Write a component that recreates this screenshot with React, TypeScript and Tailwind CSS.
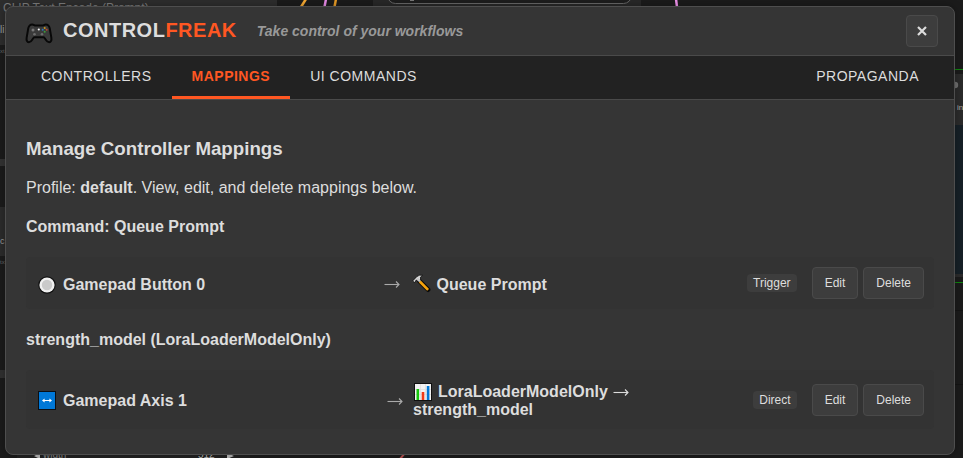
import type { ReactNode } from "react";

function GamepadIcon() {
  return (
    <svg width="28" height="22" viewBox="0 0 28 22" className="mt-[5px] block shrink-0">
      <path
        d="M7.200 1.600c1.800 0 2 1 3.400 1h6.800c1.400 0 1.600-1 3.400-1 2.600 0 3.400 1.600 4 4l1.500 8.700c.5 3-.3 5-2.200 5-2.200 0-3-2.300-4.500-4.300-.4-.6-.8-.8-1.400-.8H9.800c-.6 0-1 .2-1.400.8-1.500 2-2.300 4.300-4.500 4.300-1.900 0-2.700-2-2.200-5L3.200 5.600c.6-2.400 1.400-4 4-4z"
        fill="#3a3a3a" stroke="#080808" strokeWidth="2" strokeLinejoin="round"
      />
      <circle cx="8" cy="7" r="1.500" fill="#777" />
      <circle cx="9.500" cy="11.200" r="1.300" fill="#6c6c6c" />
      <circle cx="17" cy="11.200" r="1.300" fill="#6c6c6c" />
      <circle cx="13.800" cy="6.500" r="1.100" fill="#f4f4f4" />
      <circle cx="19.700" cy="5" r="1" fill="#c99a22" />
      <circle cx="17.700" cy="6.800" r="1" fill="#2878b8" />
      <circle cx="21.700" cy="6.800" r="1" fill="#b7442e" />
      <circle cx="19.700" cy="8.700" r="1" fill="#3b9a3b" />
    </svg>
  );
}

function ArrowIcon({ className }: { className: string }) {
  return (
    <svg width="16" height="9" viewBox="0 0 16 9" fill="none" stroke="currentColor" className={className}>
      <path d="M.5 4.500h14.500" strokeWidth="1.100" />
      <path d="M12 1.500l3 3-3 3" strokeWidth="1.100" />
    </svg>
  );
}

function RadioIcon() {
  return (
    <svg width="18" height="18" viewBox="0 0 18 18" className="mt-[3px] block">
      <circle cx="9" cy="9" r="8.700" fill="#111" />
      <circle cx="9" cy="9" r="7.600" fill="#f0f0f0" />
      <circle cx="9" cy="9" r="5.200" fill="#cacaca" />
    </svg>
  );
}

function AxisIcon() {
  return (
    <svg width="18" height="19" viewBox="0 0 18 19" className="mt-[2px] block">
      <rect width="18" height="19" fill="#0b0f14" />
      <rect x="1" y="1" width="16" height="17" fill="#0078d7" />
      <path d="M5.500 9.500h7" stroke="#fff" strokeWidth="1.200" />
      <path d="M6.600 7.600v3.800L4 9.500zM11.400 7.600v3.800L14 9.500z" fill="#fff" />
    </svg>
  );
}

function HammerIcon() {
  return (
    <svg width="19" height="19" viewBox="0 0 19 19" className="block">
      <path d="M7.500 7.200l8.600 8.500" stroke="#0a0a0a" strokeWidth="4.600" strokeLinecap="round" />
      <path d="M.6 7L5 2.400Q7.400.6 10.600 1.300L8.400 3.200 8.600 5.200 6.200 7.600 4.400 5.800 2.600 8.600z" fill="#d8d8d8" stroke="#0a0a0a" strokeWidth=".8" strokeLinejoin="round" />
      <path d="M7.800 7.500l8.300 8.400" stroke="#f7a30c" strokeWidth="2.700" />
      <path d="M5.200 4.600l2.800 2.900" stroke="#c6c6c6" strokeWidth="2.200" />
    </svg>
  );
}

function ChartIcon() {
  return (
    <svg width="18" height="18" viewBox="0 0 18 18" className="block">
      <rect width="18" height="18" fill="#101010" />
      <rect x="1" y="1" width="16" height="16" fill="#f2f2f2" />
      <path d="M1 6.500h16M1 11.500h16M6.500 1v16M11.500 1v16" stroke="#dcdcdc" strokeWidth=".7" />
      <rect x="2.500" y="6" width="2.600" height="11" fill="#16c60c" />
      <rect x="7.700" y="9" width="2.600" height="8" fill="#f03a17" />
      <rect x="12.800" y="3" width="2.600" height="14" fill="#0078d7" />
    </svg>
  );
}

function CanvasBackdrop() {
  return (
    <svg width="963" height="458" className="absolute inset-0" fontFamily="'Liberation Sans', Arial, sans-serif">
      <rect width="963" height="458" fill="#1b1b1b" />
      <rect width="277" height="45" fill="#2d2d2d" />
      <text x="3" y="11.500" fontSize="12" fill="#7c7c7c">CLIP Text Encode (Prompt)</text>
      <text x="0" y="33" fontSize="10" fill="#999">li</text>
      <text x="0" y="53" fontSize="6" fill="#666">xt</text>
      <rect y="159" width="6" height="7" fill="#333" />
      <rect y="207" width="6" height="49" fill="#2b2b2b" />
      <text x="0" y="244" fontSize="9" fill="#999">c</text>
      <text x="0" y="264" fontSize="6" fill="#666">tx</text>
      <rect y="370" width="6" height="8" fill="#303030" />
      <rect x="373" width="268" height="8" fill="#282828" />
      <rect x="387.500" y="-14" width="244" height="17.500" rx="8" fill="#1d1d1d" stroke="#666" />
      <rect x="410" width="4" height="1" fill="#777" />
      <path d="M301 7l5-8" stroke="#f5a833" strokeWidth="2.500" />
      <path d="M324.500 7l1.500-8" stroke="#e78ae7" strokeWidth="2.500" />
      <path d="M334.500 7l1.500-8" stroke="#e59a26" strokeWidth="2.500" />
      <path d="M677 7l-1-8" stroke="#f092ec" strokeWidth="2.500" />
      <path d="M955 69.500h8" stroke="#0f850f" />
      <rect x="955" y="74" width="8" height="203" fill="#2b2b2b" />
      <circle cx="955" cy="85" r="3.200" fill="#707070" />
      <text x="957" y="110" fontSize="8" fill="#aaa">in</text>
      <rect x="955" y="125" width="8" height="149" fill="#162027" />
      <path d="M955 282.500h8" stroke="#0f850f" />
      <path d="M955 310.500h8M955 384.500h8" stroke="#141414" />
      <rect x="17" y="454" width="233" height="4" fill="#222" />
      <path d="M34 456l6-3v6zM227 453l7 3-7 3z" fill="#bbb" />
      <text x="43" y="458" fontSize="10" fill="#888">width</text>
      <text x="198" y="458" fontSize="10" fill="#bbb">512</text>
      <path d="M400 459l5-6" stroke="#b85252" strokeWidth="2" />
    </svg>
  );
}

function Button({ children }: { children: ReactNode }) {
  return (
    <button className="h-8 rounded border border-[#4a4a4a] bg-[#3d3d3d] px-3 text-xs leading-none text-[#dddddd]">
      {children}
    </button>
  );
}

type MappingProps = {
  icon: ReactNode;
  source: string;
  sourceWidth: string;
  arrowGap: string;
  target: ReactNode;
  mode: string;
  height: string;
};

function Mapping({ icon, source, sourceWidth, arrowGap, target, mode, height }: MappingProps) {
  return (
    <div className={`flex items-center rounded bg-[#333333] pr-2.5 pl-3 ${height}`}>
      <div className={`flex shrink-0 items-center gap-[7px] leading-[18px] font-bold text-[#dddddd] ${sourceWidth}`}>
        {icon}
        <span className="pt-[3px]">{source}</span>
      </div>
      <ArrowIcon className={`mt-[3px] shrink-0 text-[#aaaaaa] ${arrowGap}`} />
      <div className="flex-1 leading-[18px] font-bold text-[#dddddd]">{target}</div>
      <span className="mr-[15px] rounded bg-[#3d3d3d] px-1.5 text-xs leading-[18px] text-[#dddddd]">{mode}</span>
      <div className="flex gap-[5px]">
        <Button>Edit</Button>
        <Button>Delete</Button>
      </div>
    </div>
  );
}

export default function App() {
  return (
    <div className="relative h-[458px] w-[963px] overflow-hidden bg-[#191919] font-['Liberation_Sans',Arial,sans-serif] text-base">
      <CanvasBackdrop />
      <main className="relative mt-1.5 ml-[5px] flex h-[449px] w-[950px] flex-col overflow-hidden rounded-lg border border-[#4e4e4e] bg-[#353535] text-[#dddddd] shadow-[0_0_8px_rgba(0,0,0,0.3)]">
        <header className="flex h-[49px] shrink-0 items-center border-b border-[#4a4a4a] pr-4 pl-[19px]">
          <GamepadIcon />
          <h1 className="ml-2.5 pb-[3px] text-xl leading-none font-bold tracking-[0.5px] whitespace-nowrap">
            CONTROL<span className="text-[#ff5722]">FREAK</span>
          </h1>
          <span className="ml-5 text-sm font-bold text-[#999999] italic">Take control of your workflows</span>
          <button className="ml-auto flex size-8 items-center justify-center rounded border border-[#4a4a4a] bg-[#3d3d3d]">
            <svg width="10" height="10" viewBox="0 0 10 10">
              <path d="M1 1l8 8M9 1L1 9" stroke="#dddddd" strokeWidth="2.200" />
            </svg>
          </button>
        </header>
        <nav className="flex h-11 shrink-0 border-b border-[#4a4a4a] bg-[#222222] px-[15px] text-sm leading-[41px] tracking-[0.5px]">
          <a className="px-5">CONTROLLERS</a>
          <a className="border-b-3 border-[#ff5722] px-5 font-bold text-[#ff5722]">MAPPINGS</a>
          <a className="px-5">UI COMMANDS</a>
          <a className="ml-auto px-5">PROPAGANDA</a>
        </nav>
        <section className="flex flex-col px-5 pt-[38px]">
          <h2 className="text-[18.72px] leading-[22px] font-bold">Manage Controller Mappings</h2>
          <p className="mt-[19px] leading-[18px]">
            Profile: <strong>default</strong>. View, edit, and delete mappings below.
          </p>
          <h3 className="mt-[21px] mb-[21px] leading-[18px] font-bold">Command: Queue Prompt</h3>
          <Mapping
            icon={<RadioIcon />}
            source="Gamepad Button 0"
            sourceWidth="w-[346px]"
            arrowGap="mr-3"
            height="h-[52px]"
            mode="Trigger"
            target={
              <div className="flex items-center gap-[5.5px]">
                <HammerIcon />
                <span className="pt-[3px]">Queue Prompt</span>
              </div>
            }
          />
          <h3 className="mt-[22px] mb-[21px] leading-[18px] font-bold">strength_model (LoraLoaderModelOnly)</h3>
          <Mapping
            icon={<AxisIcon />}
            source="Gamepad Axis 1"
            sourceWidth="w-[349px]"
            arrowGap="mr-2.5"
            height="h-[59px]"
            mode="Direct"
            target={
              <div className="pt-[2px]">
                <div className="ml-px flex h-[18px] items-center gap-[6px]">
                  <ChartIcon />
                  <span>LoraLoaderModelOnly</span>
                  <ArrowIcon className="mt-[2px] -ml-px" />
                </div>
                <div>strength_model</div>
              </div>
            }
          />
        </section>
      </main>
    </div>
  );
}
